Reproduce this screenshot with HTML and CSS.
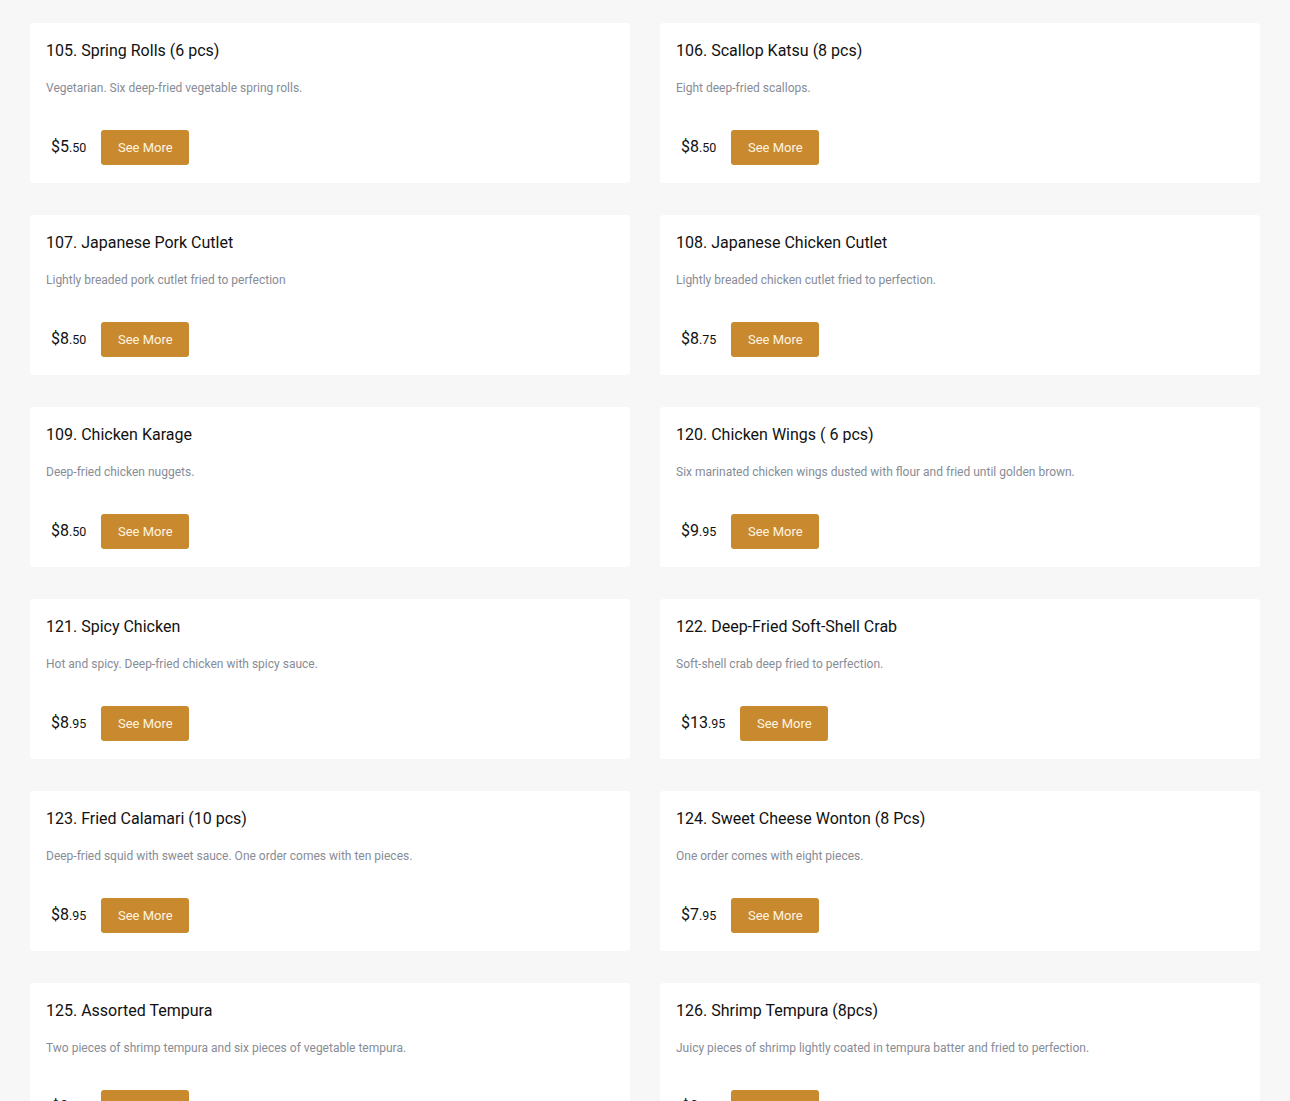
FILE: index.html
```html
<!DOCTYPE html>
<html>
<head>
<meta charset="utf-8">
<link rel="stylesheet" href="styles.css">
</head>
<body>
<div class="grid">
  <div class="card"><h3 class="title">105. Spring Rolls (6 pcs)</h3><p class="desc">Vegetarian. Six deep-fried vegetable spring rolls.</p><div class="row"><span class="price">$5<small>.50</small></span><button class="btn">See More</button></div></div>
  <div class="card"><h3 class="title">106. Scallop Katsu (8 pcs)</h3><p class="desc">Eight deep-fried scallops.</p><div class="row"><span class="price">$8<small>.50</small></span><button class="btn">See More</button></div></div>
  <div class="card"><h3 class="title">107. Japanese Pork Cutlet</h3><p class="desc">Lightly breaded pork cutlet fried to perfection</p><div class="row"><span class="price">$8<small>.50</small></span><button class="btn">See More</button></div></div>
  <div class="card"><h3 class="title">108. Japanese Chicken Cutlet</h3><p class="desc">Lightly breaded chicken cutlet fried to perfection.</p><div class="row"><span class="price">$8<small>.75</small></span><button class="btn">See More</button></div></div>
  <div class="card"><h3 class="title">109. Chicken Karage</h3><p class="desc">Deep-fried chicken nuggets.</p><div class="row"><span class="price">$8<small>.50</small></span><button class="btn">See More</button></div></div>
  <div class="card"><h3 class="title">120. Chicken Wings ( 6 pcs)</h3><p class="desc">Six marinated chicken wings dusted with flour and fried until golden brown.</p><div class="row"><span class="price">$9<small>.95</small></span><button class="btn">See More</button></div></div>
  <div class="card"><h3 class="title">121. Spicy Chicken</h3><p class="desc">Hot and spicy. Deep-fried chicken with spicy sauce.</p><div class="row"><span class="price">$8<small>.95</small></span><button class="btn">See More</button></div></div>
  <div class="card"><h3 class="title">122. Deep-Fried Soft-Shell Crab</h3><p class="desc">Soft-shell crab deep fried to perfection.</p><div class="row"><span class="price">$13<small>.95</small></span><button class="btn">See More</button></div></div>
  <div class="card"><h3 class="title">123. Fried Calamari (10 pcs)</h3><p class="desc">Deep-fried squid with sweet sauce. One order comes with ten pieces.</p><div class="row"><span class="price">$8<small>.95</small></span><button class="btn">See More</button></div></div>
  <div class="card"><h3 class="title">124. Sweet Cheese Wonton (8 Pcs)</h3><p class="desc">One order comes with eight pieces.</p><div class="row"><span class="price">$7<small>.95</small></span><button class="btn">See More</button></div></div>
  <div class="card"><h3 class="title">125. Assorted Tempura</h3><p class="desc">Two pieces of shrimp tempura and six pieces of vegetable tempura.</p><div class="row"><span class="price">$9<small>.95</small></span><button class="btn">See More</button></div></div>
  <div class="card"><h3 class="title">126. Shrimp Tempura (8pcs)</h3><p class="desc">Juicy pieces of shrimp lightly coated in tempura batter and fried to perfection.</p><div class="row"><span class="price">$9<small>.95</small></span><button class="btn">See More</button></div></div>
</div>
</body>
</html>
```

FILE: styles.css
```css
html, body {
  margin: 0;
  padding: 0;
  background: #f7f7f7;
  font-family: Roboto, "Liberation Sans", sans-serif;
}
.grid {
  display: grid;
  grid-template-columns: 600px 600px;
  column-gap: 30px;
  row-gap: 32px;
  padding: 23px 30px 40px;
}
.card {
  background: #fff;
  border-radius: 3px;
  padding: 18px 16px 18px;
  height: 160px;
  box-sizing: border-box;
}
.title {
  margin: 0;
  font-size: 16px;
  font-weight: 400;
  line-height: 20px;
  color: #111;
}
.desc {
  margin: 18px 0 0;
  font-size: 12px;
  line-height: 18px;
  color: #878c96;
}
.row {
  display: flex;
  align-items: center;
  margin-top: 33px;
}
.price {
  margin-left: 5px;
  font-size: 16px;
  line-height: 18px;
  color: #111;
}
.price small {
  font-size: 12.5px;
}
.btn {
  margin-left: 15px;
  width: 88px;
  height: 35px;
  border: none;
  border-radius: 3px;
  background: #c98a2f;
  color: #fff4e0;
  font-family: Roboto, "Liberation Sans", sans-serif;
  font-size: 13px;
  padding: 0;
}
```
